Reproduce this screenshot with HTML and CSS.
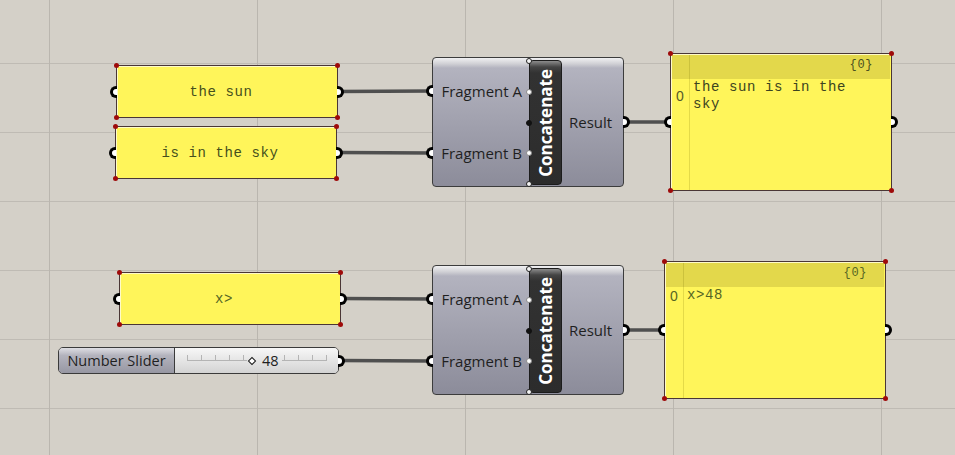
FILE: index.html
```html
<!DOCTYPE html>
<html lang="en">
<head>
    <meta charset="UTF-8">
    <meta name="viewport" content="width=device-width, initial-scale=1.0">
    <title>Concatenate</title>
    <link rel="stylesheet" href="styles.css">
</head>
<body>
    <div class="canvas">
        <!-- wires sit under the nodes -->
        <svg class="wires" width="955" height="455">
            <path d="M338 91.5 C385 91.5 385 91 432 91"/>
            <path d="M337 152.5 C385 152.5 385 153 432 153"/>
            <path d="M624 122 L670 122"/>
            <path d="M341 298.5 C385 298.5 385 299 432 299"/>
            <path d="M339 360.5 C385 360.5 385 361 432 361"/>
            <path d="M624 330 L664 330"/>
        </svg>

        <!-- first row -->
        <div class="panel text" id="sun">
            <span class="grip in"></span>
            <span>the sun</span>
            <span class="grip out"></span>
        </div>
        <div class="panel text" id="sky">
            <span class="grip in"></span>
            <span>is in the sky</span>
            <span class="grip out"></span>
        </div>

        <div class="comp" id="cat1">
            <div class="ins">
                <span><i class="grip in"></i>Fragment A</span>
                <span><i class="grip in"></i>Fragment B</span>
            </div>
            <div class="nick">
                <i class="pin end" style="top:0%"></i>
                <i class="pin" style="top:25%"></i>
                <i class="pin mid" style="top:50%"></i>
                <i class="pin" style="top:75%"></i>
                <i class="pin end" style="top:100%"></i>
                <b>Concatenate</b>
            </div>
            <div class="outs">
                <span>Result<i class="grip out"></i></span>
            </div>
        </div>

        <div class="panel out" id="out1">
            <span class="grip in"></span>
            <div class="out-head">{0}</div>
            <div class="out-row">
                <span class="idx">0</span>
                <span class="val">the sun is in the sky</span>
            </div>
            <span class="grip out"></span>
        </div>

        <!-- second row -->
        <div class="panel text" id="prefix">
            <span class="grip in"></span>
            <span>x&gt;</span>
            <span class="grip out"></span>
        </div>

        <div class="slider">
            <div class="label">Number Slider</div>
            <div class="track">
                <div class="ticks"></div>
                <div class="value"><span class="knob"></span>48</div>
            </div>
            <span class="grip out"></span>
        </div>

        <div class="comp" id="cat2">
            <div class="ins">
                <span><i class="grip in"></i>Fragment A</span>
                <span><i class="grip in"></i>Fragment B</span>
            </div>
            <div class="nick">
                <i class="pin end" style="top:0%"></i>
                <i class="pin" style="top:25%"></i>
                <i class="pin mid" style="top:50%"></i>
                <i class="pin" style="top:75%"></i>
                <i class="pin end" style="top:100%"></i>
                <b>Concatenate</b>
            </div>
            <div class="outs">
                <span>Result<i class="grip out"></i></span>
            </div>
        </div>

        <div class="panel out" id="out2">
            <span class="grip in"></span>
            <div class="out-head">{0}</div>
            <div class="out-row">
                <span class="idx">0</span>
                <span class="val">x&gt;48</span>
            </div>
            <span class="grip out"></span>
        </div>
    </div>
</body>
</html>
```
FILE: styles.css
```css
/* Lienzo */
body {
    margin: 0;
    background: #d4d0c8;
}

.canvas {
    position: relative;
    width: 955px;
    height: 455px;
    overflow: hidden;
    background-color: #d4d0c8;
    background-image:
        linear-gradient(to right, #bab6af 1px, transparent 1px),
        linear-gradient(to bottom, #bfbbb4 1px, transparent 1px);
    background-size: 208px 100%, 100% 69px;
    background-position: 49px 0, 0 63px;
}

.wires {
    position: absolute;
    left: 0;
    top: 0;
}

.wires path {
    fill: none;
    stroke: #4f4f4f;
    stroke-width: 3.5;
}

/* Grips (entradas / salidas) */
.grip {
    position: absolute;
    top: 50%;
    width: 7px;
    height: 12px;
    margin-top: -6px;
    box-sizing: border-box;
    border: 3px solid #000;
    background: #fff;
    z-index: 2;
}

.grip.in {
    left: -7px;
    border-right: 0;
    border-radius: 7px 0 0 7px;
}

.grip.out {
    right: -7px;
    border-left: 0;
    border-radius: 0 7px 7px 0;
}

/* Paneles amarillos */
.panel {
    position: absolute;
    width: 222px;
    box-sizing: border-box;
    background: #fff55a;
    border: 1px solid #4a3636;
    box-shadow: inset 1px 1px 0 #fffbc8;
    font-family: "Liberation Mono", "Courier New", monospace;
    font-size: 14px;
    letter-spacing: .6px;
    color: #454f1c;
}

.panel::before,
.panel::after {
    content: '';
    position: absolute;
    left: -3px;
    width: 5px;
    height: 5px;
    border-radius: 50%;
    background: #9e0a0a;
    box-shadow: 221px 0 0 #9e0a0a;
}

.panel::before {
    top: -3px;
}

.panel::after {
    bottom: -3px;
}

.panel.text {
    height: 53px;
    display: flex;
    align-items: center;
    justify-content: center;
    padding-right: 12px;
}

#sun { left: 116px; top: 65px; }
#sky { left: 115px; top: 126px; }
#prefix { left: 119px; top: 272px; color: #566624; }

.panel.out {
    height: 138px;
    background:
        linear-gradient(to right, transparent 18px, rgba(120, 110, 0, .2) 18px, rgba(120, 110, 0, .2) 19px, transparent 19px),
        #fff55a;
}

#out1 { left: 670px; top: 53px; }
#out2 { left: 664px; top: 261px; }
#out2 .val, #out2 .idx, #out2 .out-head { color: #566624; }

.out-head {
    height: 24px;
    margin: 1px 1px 0;
    padding-right: 17px;
    background: rgba(80, 70, 0, .16);
    text-align: right;
    font-size: 12px;
    line-height: 21px;
    color: #4a5020;
}

.out-row {
    display: flex;
    align-items: center;
}

.idx {
    width: 18px;
    text-align: center;
    font-family: "Liberation Sans", Arial, sans-serif;
    font-size: 14px;
    letter-spacing: 0;
    color: #555a2a;
}

.val {
    width: 170px;
    padding-left: 4px;
    line-height: 17px;
    color: #3c4420;
}

/* Componente Concatenate */
.comp {
    position: absolute;
    left: 432px;
    width: 192px;
    height: 130px;
    box-sizing: border-box;
    display: flex;
    border: 1px solid #3c3c3c;
    border-radius: 4px;
    background: linear-gradient(#f0f0f2, #cfcfd4 6px, #b3b3bf 10px, #8c8c9a);
    font-family: "Open Sans", sans-serif;
    font-size: 15px;
    color: #1f1f1f;
}

#cat1 { top: 57px; }
#cat2 { top: 265px; }

.ins {
    width: 96px;
    display: flex;
    flex-direction: column;
    padding: 2px 0;
    box-sizing: border-box;
}

.ins span {
    flex: 1;
    position: relative;
    display: flex;
    align-items: center;
    justify-content: flex-end;
    padding-right: 7px;
}

.nick {
    position: relative;
    width: 33px;
    margin: 2px 0 1px;
    box-sizing: border-box;
    display: flex;
    align-items: center;
    justify-content: center;
    border: 1px solid #1c1c1c;
    border-radius: 4px;
    background: linear-gradient(#8c8c8c, #444 6px, #323232 12px, #2c2c2c);
}

.nick b {
    writing-mode: vertical-rl;
    transform: rotate(180deg);
    color: #fff;
    font-size: 17px;
    font-weight: 700;
}

.pin {
    position: absolute;
    left: -4px;
    width: 4px;
    height: 4px;
    margin-top: -3px;
    border: 1px solid #8a8a8a;
    border-radius: 50%;
    background: #fff;
}

.pin.end {
    border-color: #222;
    background: #f4f4f4;
}

.pin.mid {
    border-color: #111;
    background: #111;
}

.outs {
    flex: 1;
    display: flex;
    align-items: center;
}

.outs span {
    flex: 1;
    position: relative;
    padding-left: 7px;
}

/* Number Slider */
.slider {
    position: absolute;
    left: 58px;
    top: 347px;
    width: 281px;
    height: 27px;
    box-sizing: border-box;
    display: flex;
    border: 1px solid #3a3a3a;
    border-radius: 5px;
    font-family: "Open Sans", sans-serif;
    font-size: 14.5px;
    color: #1f1f1f;
}

.slider .label {
    width: 115px;
    display: flex;
    align-items: center;
    justify-content: center;
    border-right: 1px solid #3a3a3a;
    border-radius: 4px 0 0 4px;
    background: linear-gradient(#dedee3, #b3b3bd 30%, #9797a3);
}

.slider .track {
    flex: 1;
    position: relative;
    border-radius: 0 4px 4px 0;
    background: linear-gradient(#f7f7f7, #d3d3d3);
}

.ticks {
    position: absolute;
    left: 12px;
    top: 7px;
    width: 140px;
    height: 5px;
    border-bottom: 1px solid #b4b4b4;
    background: repeating-linear-gradient(to right, #b4b4b4 0 1px, transparent 1px 13.9px);
}

.value {
    position: absolute;
    left: 72px;
    top: 0;
    bottom: 0;
    display: flex;
    align-items: center;
    gap: 7px;
    padding: 0 3px 0 2px;
    background: linear-gradient(#f7f7f7, #d3d3d3);
}

.knob {
    width: 4px;
    height: 4px;
    border: 1.5px solid #111;
    background: #fff;
    transform: rotate(45deg);
}
```
